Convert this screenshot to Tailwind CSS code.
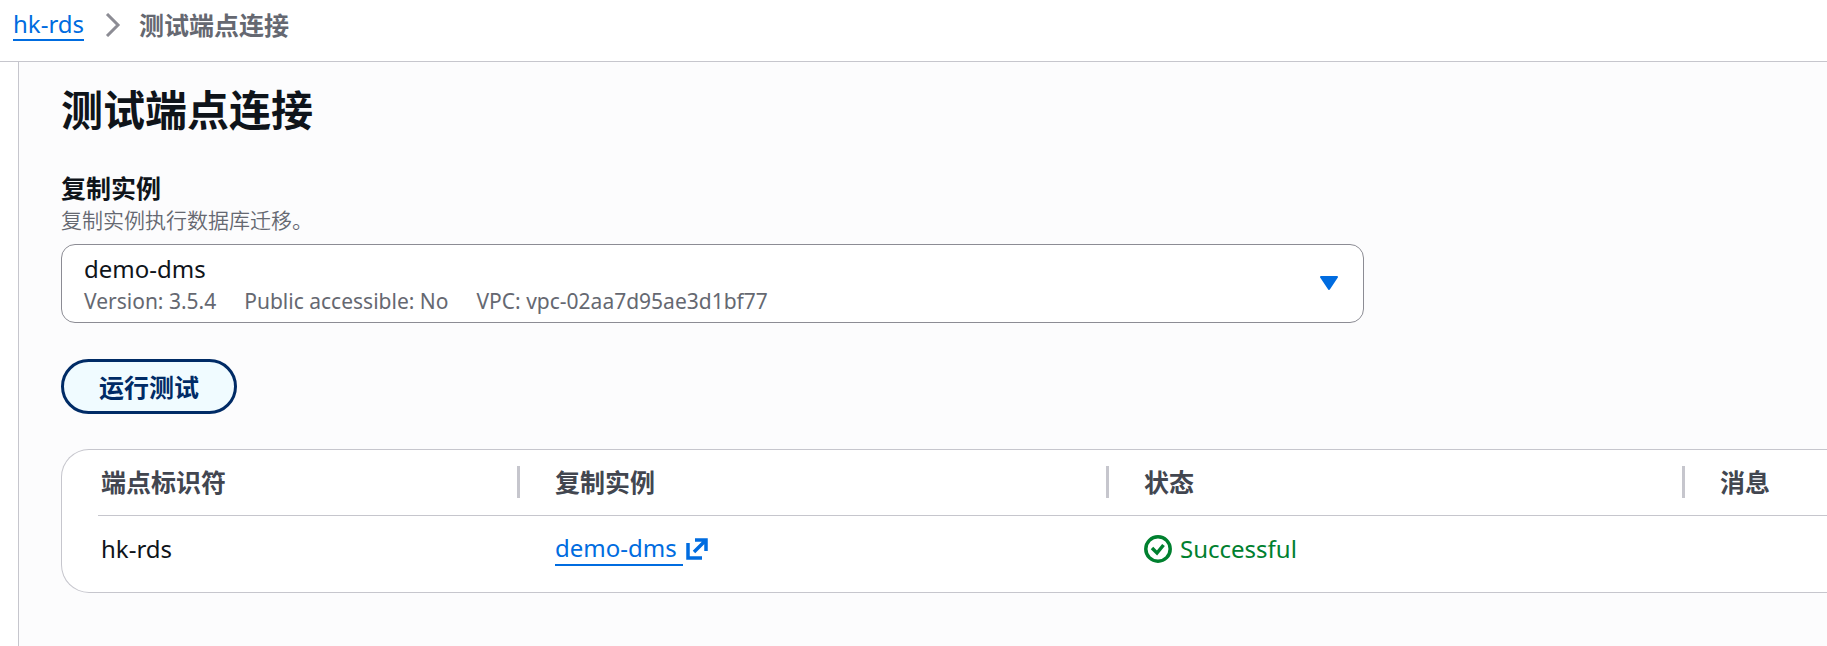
<!DOCTYPE html>
<html lang="zh-CN">

<head>
    <meta charset="utf-8">
    <meta name="viewport" content="width=device-width, initial-scale=1">
    <title>测试端点连接</title>
    <script src="https://cdn.jsdelivr.net/npm/@tailwindcss/browser@4"></script>
</head>

<body class="flex min-h-screen flex-col overflow-x-hidden bg-white font-['Noto_Sans','Noto_Sans_CJK_SC',sans-serif] text-[24px] leading-8 text-[#0f141a]">
    <!-- breadcrumbs -->
    <nav class="flex h-[62px] items-start border-b border-[#c6c6cd] px-[13px] pt-2" aria-label="Breadcrumbs">
        <ol class="flex items-center">
            <li><a href="#" class="block h-[33px] border-b-2 border-[#006ce0] text-[#006ce0]">hk-rds</a></li>
            <li class="flex items-center">
                <svg class="mr-[18px] ml-[21px] h-6 w-4" viewBox="0 0 16 24" fill="none" stroke="#8c8c94" stroke-width="3" aria-hidden="true">
                    <path d="M2 1l11 11L2 23" />
                </svg>
            </li>
            <li class="text-[25px] leading-[30px] font-bold text-[#656871]" aria-current="page">测试端点连接</li>
        </ol>
    </nav>

    <main class="ml-[18px] flex-1 border-l border-[#c6c6cd] bg-[#fcfcfd] pt-[18px] pl-[42px]">
        <h1 class="text-[42px] leading-[60px] font-bold">测试端点连接</h1>

        <div class="mt-8 w-[1303px] max-w-[74%]">
            <label for="instance" class="block text-[25px] leading-8 font-bold">复制实例</label>
            <p id="instance-hint" class="text-[21px] leading-8 font-[350] text-[#656871]">复制实例执行数据库迁移。</p>
            <div class="relative mt-2">
                <select id="instance" aria-describedby="instance-hint" class="block h-[79px] w-full appearance-none rounded-[14px] border border-[#8c8c94] bg-white px-[22px] pt-[6px] pb-9 leading-8">
                    <option>demo-dms</option>
                </select>
                <!-- details of the selected instance -->
                <div class="pointer-events-none absolute bottom-2 left-[23px] flex gap-7 text-[21px] leading-7 text-[#656871]">
                    <span>Version: 3.5.4</span>
                    <span>Public accessible: No</span>
                    <span>VPC: vpc-02aa7d95ae3d1bf77</span>
                </div>
                <svg class="pointer-events-none absolute top-8 right-[26px] h-4 w-[18px]" viewBox="0 0 18 16" fill="#006ce0" stroke="#006ce0" stroke-width="2" stroke-linejoin="round" aria-hidden="true">
                    <path d="M1 1h16L9 13z" />
                </svg>
            </div>
        </div>

        <button type="button" class="mt-9 flex h-[55px] w-44 items-center justify-center rounded-full border-3 border-[#002b66] bg-[#f0fbff] text-[25px] leading-8 font-bold text-[#002b66]">运行测试</button>

        <section class="mt-[35px] rounded-l-[28px] border border-r-0 border-[#c6c6cd] bg-white pb-[9px] pl-9">
            <table class="w-full table-fixed border-collapse text-left">
                <colgroup>
                    <col class="w-[422px]">
                    <col class="w-[589px]">
                    <col class="w-[576px]">
                    <col>
                </colgroup>
                <thead class="text-[25px] text-[#424650]">
                    <tr class="h-[65px] border-b border-[#c6c6cd]">
                        <th scope="col" class="p-0">
                            <div class="border-r-3 border-[#c6c6cd] pl-[3px]">端点标识符</div>
                        </th>
                        <th scope="col" class="p-0">
                            <div class="border-r-3 border-[#c6c6cd] pl-[35px]">复制实例</div>
                        </th>
                        <th scope="col" class="p-0">
                            <div class="border-r-3 border-[#c6c6cd] pl-[35px]">状态</div>
                        </th>
                        <th scope="col" class="p-0">
                            <div class="pl-[35px]">消息</div>
                        </th>
                    </tr>
                </thead>
                <tbody>
                    <tr class="h-[68px]">
                        <td class="py-0 pl-[3px]">hk-rds</td>
                        <td class="py-0 pl-[35px]">
                            <a href="#" class="flex w-fit items-center gap-[3px] text-[#006ce0]">
                                <span class="h-[34px] border-b-2 border-[#006ce0] pr-[6px]">demo-dms</span>
                                <svg class="h-[22px] w-[22px]" viewBox="0 0 22 22" fill="none" stroke="#006ce0" stroke-width="3.5" aria-hidden="true">
                                    <path d="M2 5v15h14M9 2h11v11M20 2L8 14" />
                                </svg>
                            </a>
                        </td>
                        <td class="py-0 pl-[35px]">
                            <span class="flex items-center gap-2 text-[#00802f]">
                                <svg class="h-7 w-7" viewBox="0 0 28 28" fill="none" stroke="#00802f" stroke-width="3.5" aria-hidden="true">
                                    <circle cx="14" cy="14" r="12.2" />
                                    <path d="M8 13l5 5 6.500-8" />
                                </svg>
                                Successful
                            </span>
                        </td>
                        <td></td>
                    </tr>
                </tbody>
            </table>
        </section>
    </main>
</body>

</html>
